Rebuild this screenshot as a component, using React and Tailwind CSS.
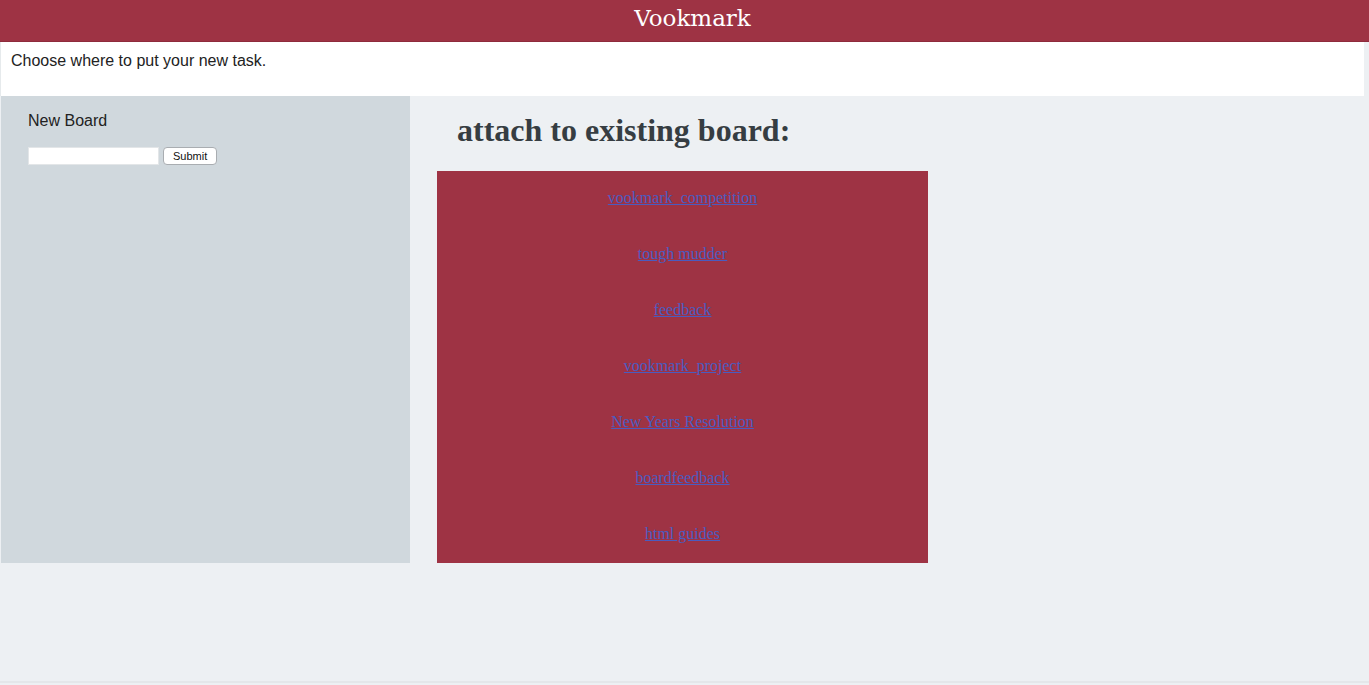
export default function App() {
  const boards = [
    "vookmark_competition",
    "tough mudder",
    "feedback",
    "vookmark_project",
    "New Years Resolution",
    "boardfeedback",
    "html guides",
  ];
  return (
    <div className="w-[1369px] h-[685px] bg-[#edf0f3] overflow-hidden flex flex-col">
      <div className="h-[683px] flex flex-col border-b-2 border-[#e4e7ea]">
        <header className="h-[42px] shrink-0 bg-[#9e3344] flex items-center justify-center pl-[16px] pb-[4px] border-b border-[#8e2b3c]">
          <span className="text-white text-[23px] leading-none" style={{ fontFamily: '"DejaVu Serif", serif' }}>
            Vookmark
          </span>
        </header>
        <div className="flex">
          <div className="w-[1364px] h-[54px] bg-white border-l border-[#e6eaec] pl-[10px] pt-[7px] text-[16px] text-[#222]" style={{ fontFamily: '"Liberation Sans", Arial, sans-serif' }}>
            Choose where to put your new task.
          </div>
        </div>
        <div className="flex">
          <div className="ml-[1px] w-[409px] h-[467px] bg-[#d0d8dd] pl-[27px] pt-[15px]" style={{ fontFamily: '"Liberation Sans", Arial, sans-serif' }}>
            <div className="text-[16px] text-[#222] leading-[20px]">New Board</div>
            <div className="flex items-center mt-[16px] gap-[4px]">
              <input className="w-[131px] h-[18px] bg-white border border-[#e3e6e8] outline-none" />
              <button className="h-[18px] px-[9px] bg-white border border-[#a9adb1] rounded-[4px] text-[11px] leading-none text-[#111]">
                Submit
              </button>
            </div>
          </div>
          <div className="ml-[27px] flex flex-col">
            <h2 className="text-[32px] font-bold text-[#363d42] pl-[20px] pt-[15px] h-[75px] leading-[38px]" style={{ fontFamily: '"Liberation Serif", "Times New Roman", serif' }}>
              attach to existing board:
            </h2>
            <div className="w-[491px] h-[392px] bg-[#9e3344] flex flex-col items-center pt-[17px]" style={{ fontFamily: '"Liberation Serif", "Times New Roman", serif' }}>
              {boards.map((b) => (
                <div key={b} className="h-[56px] shrink-0">
                  <a href="#" className="block text-[16px] leading-[20px] text-[#4a5cc0] underline">
                    {b}
                  </a>
                </div>
              ))}
            </div>
          </div>
        </div>
      </div>
    </div>
  );
}
